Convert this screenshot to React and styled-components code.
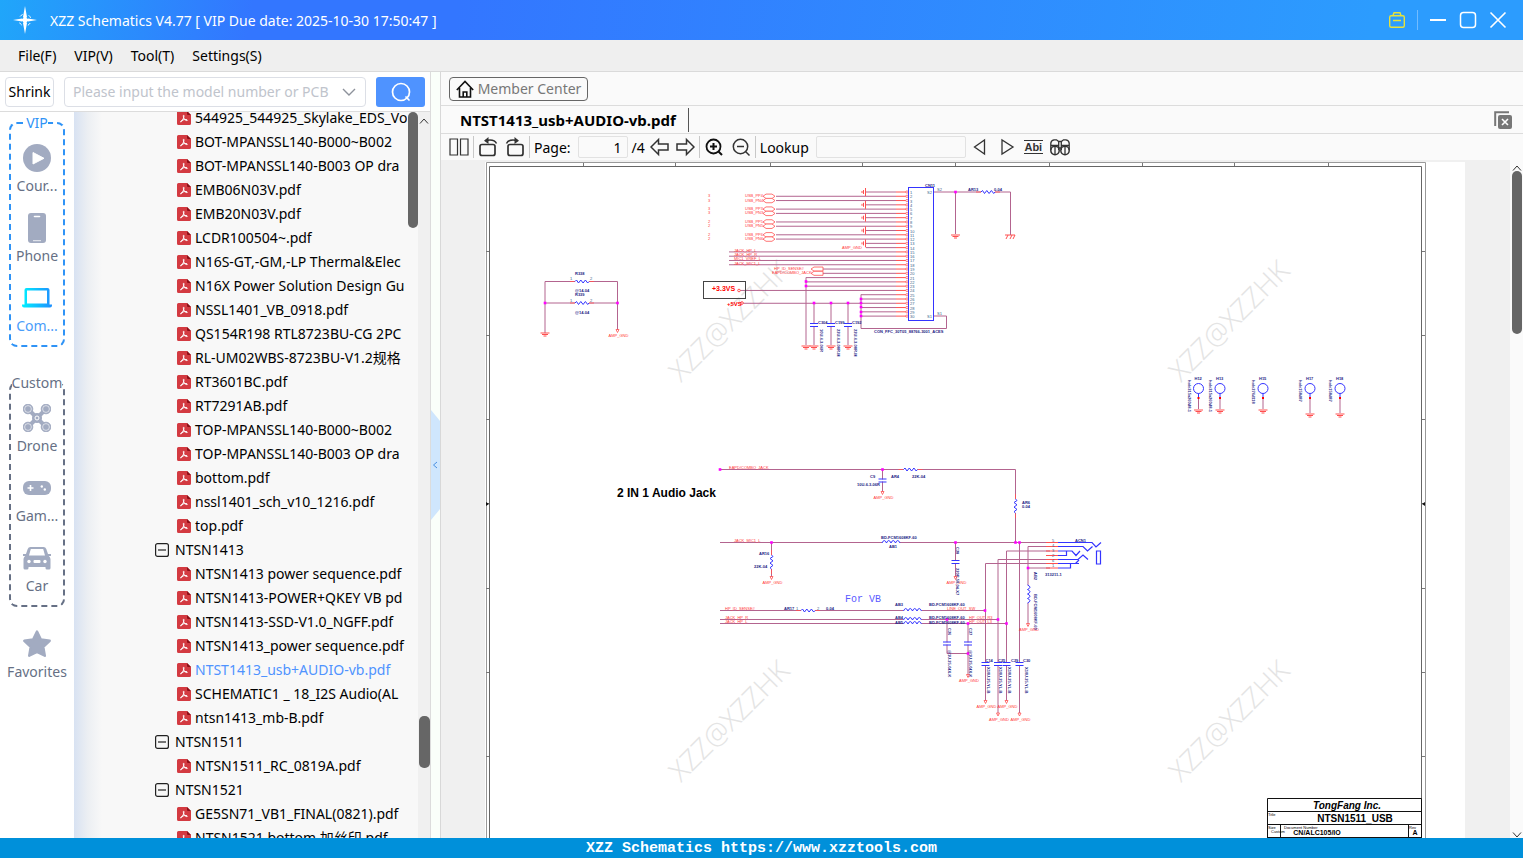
import React from 'react'
import styled, { createGlobalStyle, css } from 'styled-components'

const files = [
  { name: '544925_544925_Skylake_EDS_Vo' },
  { name: 'BOT-MPANSSL140-B000~B002' },
  { name: 'BOT-MPANSSL140-B003 OP dra' },
  { name: 'EMB06N03V.pdf' },
  { name: 'EMB20N03V.pdf' },
  { name: 'LCDR100504~.pdf' },
  { name: 'N16S-GT,-GM,-LP Thermal&Elec' },
  { name: 'N16X Power Solution Design Gu' },
  { name: 'NSSL1401_VB_0918.pdf' },
  { name: 'QS154R198 RTL8723BU-CG 2PC' },
  { name: 'RL-UM02WBS-8723BU-V1.2规格' },
  { name: 'RT3601BC.pdf' },
  { name: 'RT7291AB.pdf' },
  { name: 'TOP-MPANSSL140-B000~B002' },
  { name: 'TOP-MPANSSL140-B003 OP dra' },
  { name: 'bottom.pdf' },
  { name: 'nssl1401_sch_v10_1216.pdf' },
  { name: 'top.pdf' },
  { name: 'NTSN1413', folder: true },
  { name: 'NTSN1413 power sequence.pdf' },
  { name: 'NTSN1413-POWER+QKEY VB pd' },
  { name: 'NTSN1413-SSD-V1.0_NGFF.pdf' },
  { name: 'NTSN1413_power sequence.pdf' },
  { name: 'NTST1413_usb+AUDIO-vb.pdf', active: true },
  { name: 'SCHEMATIC1 _ 18_I2S Audio(AL' },
  { name: 'ntsn1413_mb-B.pdf' },
  { name: 'NTSN1511', folder: true },
  { name: 'NTSN1511_RC_0819A.pdf' },
  { name: 'NTSN1521', folder: true },
  { name: 'GE5SN71_VB1_FINAL(0821).pdf' },
  { name: 'NTSN1521 bottom 加丝印.pdf' },
]

/* ---------- icons ---------- */

const LogoIcon = () => (
  <svg width='24' height='30' viewBox='0 0 24 30' fill='#fff'>
    <path d='M12 1 14 12 12 15 10 12zM12 29 14 18 12 15 10 18zM0 15 9 13.600 12 15 9 16.400zM24 15 15 13.600 12 15 15 16.400z' />
    <circle cx='12' cy='15' r='6' fill='none' stroke='#fff' strokeDasharray='3 6.420' strokeDashoffset='-3.200' />
    <circle cx='12' cy='15' r='2.500' />
  </svg>
)

const BagIcon = () => (
  <svg width='18' height='18' viewBox='0 0 18 18' fill='none' stroke='#e6e23c' strokeWidth='1.4'>
    <rect x='1.700' y='4.700' width='14.600' height='11.600' rx='1.500' />
    <path d='M5 4.500 6 1.700h6l1 2.800M5 9.500h8' />
  </svg>
)

const PdfIcon = () => (
  <svg width='14' height='14' viewBox='0 0 14 14'>
    <path d='M1.500 0H10l4 4v8.500a1.500 1.500 0 0 1-1.500 1.500h-11A1.500 1.500 0 0 1 0 12.500v-11A1.500 1.500 0 0 1 1.500 0z' fill='#d33a41' />
    <path d='M10 0l4 4h-3a1 1 0 0 1-1-1z' fill='#8c1018' />
    <path d='M6.600 4.200c.8 0 .2 2.300-.5 3.800-.7 1.600-1.600 3-2.300 3-.9 0 .2-1.500 2.400-2.100 1.900-.5 4.200-.5 4.200.3 0 .9-2 .3-3-1.100C6.400 6.800 6 4.200 6.600 4.200z' fill='none' stroke='#fff' strokeWidth='1' />
  </svg>
)

const FolderIcon = () => (
  <svg width='14' height='14' viewBox='0 0 14 14' fill='none' stroke='#222' strokeWidth='1.200'>
    <rect x='.6' y='.6' width='12.800' height='12.800' rx='2' />
    <path d='M3 7h8' />
  </svg>
)

const CourseIcon = () => (
  <svg width='28' height='28' viewBox='0 0 28 28'>
    <circle cx='14' cy='14' r='14' fill='#a2abc1' />
    <path d='M10 8.500v11.500l11-5.700z' fill='#fff' stroke='#fff' strokeWidth='1' strokeLinejoin='round' />
  </svg>
)

const PhoneIcon = () => (
  <svg width='28' height='30' viewBox='0 0 28 30'>
    <rect x='5' y='0' width='18' height='30' rx='3' fill='#a2abc1' />
    <path d='M11.500 3.500h5' stroke='#fff' strokeWidth='1.600' strokeLinecap='round' />
    <path d='M10 27.700h8' stroke='#fff' strokeWidth='.8' />
  </svg>
)

const LaptopIcon = () => (
  <svg width='30' height='28' viewBox='0 0 30 28'>
    <defs>
      <linearGradient id='lap' x1='0' x2='1'>
        <stop offset='0' stopColor='#00f0ff' />
        <stop offset='1' stopColor='#1f8fff' />
      </linearGradient>
    </defs>
    <path fill='url(#lap)' fillRule='evenodd' d='M4.500 4h21a2 2 0 0 1 2 2v14.500h-25V6a2 2 0 0 1 2-2zM5 6.500v13h20v-13zM0 20.500h30v1a2 2 0 0 1-2 2H2a2 2 0 0 1-2-2z' />
  </svg>
)

const DroneIcon = () => (
  <svg width='28' height='28' viewBox='0 0 28 28' fill='none' stroke='#a2abc1'>
    <path d='M6 6l16 16M22 6 6 22' strokeWidth='4' />
    {[[5, 5], [23, 5], [5, 23], [23, 23]].map(([x, y]) => (
      <g key={`${x}${y}`}>
        <circle cx={x} cy={y} r='4.800' fill='#a2abc1' />
        <circle cx={x} cy={y} r='3.400' stroke='#fff' strokeWidth='.6' />
      </g>
    ))}
    <circle cx='14' cy='14' r='4.500' fill='#a2abc1' />
    <circle cx='14' cy='14' r='2' stroke='#fff' />
  </svg>
)

const GameIcon = () => (
  <svg width='28' height='28' viewBox='0 0 28 28'>
    <rect x='0' y='7' width='28' height='14' rx='6' fill='#a2abc1' />
    <path d='M4.500 14h6M7.500 11v6' stroke='#fff' strokeWidth='1.600' />
    <circle cx='18.800' cy='12.500' r='1.200' fill='#fff' />
    <circle cx='21.800' cy='15.500' r='1.200' fill='#fff' />
  </svg>
)

const CarIcon = () => (
  <svg width='28' height='28' viewBox='0 0 28 28'>
    <path fill='#a2abc1' fillRule='evenodd' d='M7.500 3h13a3 3 0 0 1 2.800 2l1.700 5H28v2h-2.200c1 .8 1.700 2 1.700 3.500V24a1.500 1.500 0 0 1-1.500 1.500h-2A1.500 1.500 0 0 1 22.500 24v-1h-17v1A1.500 1.500 0 0 1 4 25.500H2A1.500 1.500 0 0 1 .5 24v-8.500c0-1.500.7-2.700 1.700-3.500H0v-2h3l1.700-5a3 3 0 0 1 2.800-2zM7.800 5 6 11.500h16L20.200 5z' />
    <g fill='#fff'>
      <circle cx='6' cy='17.500' r='1.700' />
      <circle cx='22' cy='17.500' r='1.700' />
      <rect x='10.500' y='16' width='7' height='3' rx='1' />
    </g>
  </svg>
)

const StarIcon = () => (
  <svg width='28' height='28' viewBox='0 0 28 28'>
    <path d='M14 1.500l3.900 8 8.800 1.300-6.400 6.200 1.500 8.800L14 21.900l-7.800 3.900L7.700 17 1.300 10.800l8.800-1.300z' fill='#a2abc1' stroke='#a2abc1' strokeWidth='2.400' strokeLinejoin='round' />
  </svg>
)

const SearchIcon = () => (
  <svg width='22' height='22' viewBox='0 0 22 22' fill='none' stroke='#fff' strokeWidth='1.700' strokeLinecap='round'>
    <circle cx='11' cy='11' r='8.500' />
    <path d='M16 16l3 3' />
  </svg>
)

const HomeIcon = () => (
  <svg width='18' height='18' viewBox='0 0 18 18' fill='none' stroke='#111' strokeWidth='1.600'>
    <path d='M.8 10 9 1.500 17.200 10M3.500 8v9h11V8M7.200 17v-5h3.600v5' />
  </svg>
)

const ToolIcon = ({ children, width = 20 }) => (
  <svg width={width} height='20' viewBox={`0 0 ${width} 20`} fill='none' stroke='#333' strokeWidth='1.500'>
    {children}
  </svg>
)

/* ---------- schematic symbols ---------- */

const WIRE = '#b3648f'
const RED = '#ff5050'
const BLUE = '#3434ff'

const Wire = ({ d, color = WIRE }) => <path d={d} fill='none' stroke={color} strokeWidth='1' />
const Node = ({ x, y }) => <rect x={x - 1.300} y={y - 1.300} width='2.600' height='2.600' fill='#f0f' />
const Ground = ({ x, y }) => <path d={`M${x - 4.500} ${y}h9M${x - 3} ${y + 1.500}h6M${x - 1.500} ${y + 3}h3`} stroke={RED} strokeWidth='1' />
const Cap = ({ x, y }) => (
  <g>
    <rect x={x - 1} y={y - 1} width='2' height='2' fill='#fff' />
    <path d={`M${x - 4} ${y - 1.500}h8M${x - 4} ${y + 1.500}h8`} stroke={BLUE} />
  </g>
)
const Resistor = ({ x, y, vertical }) => (
  <g transform={`translate(${x} ${y}) rotate(${vertical ? 90 : 0})`}>
    <path d='M-7 0H7' stroke='#fff' strokeWidth='2' />
    <path d='M-12 0h5M7 0h5' stroke={RED} strokeWidth='.8' />
    <path d='M-7 0l1.500-1.500 2 3 2.300-3 2.300 3 2.300-3 2.300 3L7 0' fill='none' stroke={BLUE} />
  </g>
)
const Coil = ({ x, y, vertical }) => (
  <g transform={`translate(${x} ${y}) rotate(${vertical ? 90 : 0})`}>
    <path d='M-9 0H9' stroke='#fff' strokeWidth='2' />
    <path d='M-9 .5q2.200-5 4.500 0q2.200-5 4.500 0q2.200-5 4.500 0q2.200-5 4.500 0' fill='none' stroke={BLUE} />
  </g>
)
const AmpGnd = ({ x, y }) => (
  <g>
    <path d={`M${x - 1.500} ${y - 2.500}h3l-1.500 3z`} fill='#fff' stroke={RED} strokeWidth='.8' />
    <Net x={x - 9} y={y + 5}>AMP_GND</Net>
  </g>
)

const pinY = n => 192 + (n - 1) * 4.280
const pinStart = n => {
  if ([1, 4, 7, 10, 13, 14].includes(n)) return 866
  if (n < 13) return 776
  if (n < 19) return 729
  if (n < 21) return 823
  if (n < 24) return 806
  if (n === 24) return 739
  if (n === 27) return 743
  return 861
}
const pins = Array.from({ length: 30 }, (_, i) => i + 1)

const Connector = () => (
  <g>
    {pins.map(n => (
      <g key={n}>
        <Wire d={`M${pinStart(n)} ${pinY(n)}H896`} />
        <Wire d={`M896 ${pinY(n)}H906`} color={RED} />
        <circle cx='907' cy={pinY(n)} r='1.200' fill='#fff' stroke={RED} strokeWidth='.7' />
        <Pin x='910' y={pinY(n) + 2}>{n}</Pin>
      </g>
    ))}
    <rect x='908.500' y='187.500' width='25' height='133' fill='none' stroke={BLUE} />
    {[1, 4, 7, 10, 13].map(n => (
      <path key={n} d={`M865.500 ${pinY(n) - 4}v8M863.500 ${pinY(n) - 2}v4M862 ${pinY(n) - 1}v2`} stroke={RED} />
    ))}
    {[2, 3, 5, 6, 8, 9, 11, 12].map((n, i) => (
      <g key={n}>
        <path d={`M763 ${pinY(n)}l3-2.200h6l3 2.200-3 2.200h-6z`} fill='#fff' stroke={RED} strokeWidth='.8' />
        <Net x='745' y={pinY(n) + 1}>{['USB_PP4', 'USB_PN4', 'USB_PP3', 'USB_PN3', 'USB_PP5', 'USB_PN5', 'USB_PP6', 'USB_PN6'][i]}</Net>
        <Net x='708' y={pinY(n) + 1}>{i < 4 ? 3 : 2}</Net>
      </g>
    ))}
    {['JACK_HP_L', 'JACK_HP_R', 'MIC1_VREF_L', 'JACK_MIC1_L'].map((t, i) => (
      <Net key={t} x='734' y={pinY(15 + i)}>{t}</Net>
    ))}
    <Net x='842' y={pinY(14) + 1}>AMP_GND</Net>
    {[19, 20].map(n => (
      <path key={n} d={`M823 ${pinY(n) - 2}h-9l-3 2 3 2h9z`} fill='#fff' stroke={RED} strokeWidth='.8' />
    ))}
    <Net x='774' y={pinY(19) + 1}>HP_ID_SENSE#</Net>
    <Net x='772' y={pinY(20) + 1}>EAPD/COMBO_JACK</Net>
    <Wire d='M806 277.500V345M861 294.500V328.500H946.500V316H934M934 192H1010.500V235M955.500 192V234' />
    <Ground x={806} y={346} />
    <Ground x={955.500} y={235} />
    <path d='M1005 235h10M1006 239l2-4M1010 239l2-4M1013 239l2-4' stroke={RED} />
    <Resistor x={988} y={192} />
    {[[806, 281.500], [806, 286], [861, 299], [861, 303], [861, 307], [861, 312], [861, 316], [955.500, 192]].map(([x, y]) => (
      <Node key={`${x}-${y}`} x={x} y={y} />
    ))}
    {[[814, 'C304', '10U-6.3-06R'], [831, 'C199', '22U-6.3-08R-M'], [848, 'C192', '22U-6.3-08R-M']].map(([x, a, b]) => (
      <g key={x}>
        <Wire d={`M${x} 303V345`} />
        <Node x={x} y={303} />
        <Cap x={x} y={325} />
        <Ground x={x} y={346} />
        <Part x={x + 4} y='324'>{a}</Part>
        <Part transform={`translate(${x + 6} 329) rotate(90)`}>{b}</Part>
      </g>
    ))}
    <Part x='925' y='187'>CN11</Part>
    <Pin x='927' y='194'>S2</Pin>
    <Pin x='927' y='318'>S1</Pin>
    <Pin x='937' y='191'>S2</Pin>
    <Pin x='937' y='315'>S1</Pin>
    <Part x='968' y='191'>AR13</Part>
    <Part x='994' y='191'>0-04</Part>
    <Part x='874' y='333'>CON_FFC_30T05_88766-3001_ACES</Part>
    <rect x='703.500' y='281.500' width='42' height='17' fill='none' stroke='#444' />
    <circle cx='739' cy='290.500' r='1.300' fill='#fff' stroke={RED} />
    <circle cx='742' cy='303' r='1.300' fill='#fff' stroke={RED} />
    <Power x='712' y='291' $size={7}>+3.3VS</Power>
    <Power x='727' y='306' $size={6}>+5VS</Power>
  </g>
)

const holes = [
  [1198.500, 'H12', 'hole315x260d8-1', 409],
  [1220, 'H13', 'hole315x260d8-1', 409],
  [1263, 'H15', 'hole276d118', 409],
  [1310, 'H17', 'hole158d87', 413],
  [1340, 'H18', 'hole158d87', 413],
]

const Audio = () => (
  <g>
    <Wire d='M720 469.500H1015.500V542.500M882.500 469.500V493M720 542.500H1050M771.500 542.500V578M955.500 542.500V579M720 610.500H985.500M720 619.500H998M720 623.500H1006.500' />
    <Wire d='M1050 546.500H1028V626M1050 551H1006.500V702M1050 559.500H998V715M1050 563.500H985.500V702M1019.500 542.500V715M1028 568H1050M947 619.500V653.500H968M968 623.500V677' />
    <path d='M1046 542.500h12M1046 546.500h12M1046 551h12M1046 555.500h12M1046 559.500h12M1046 563.500h12M1046 568h12' stroke={RED} />
    <path d='M1058 542.500h34l4 4.500 5-4.500M1058 546.500h25l4.500 4.500 5-4.500M1058 551h14l4 4.500 4-4.500M1058 555.500h8.500V551M1058 559.500h20l5-4.500 5 4.500M1079 560l-3.500 3.500M1058 563.500h21M1058 568h12.500v-4.500M1096.500 551h4v13h-4z' fill='none' stroke={BLUE} strokeWidth='1.200' />
    {[[720, 469.500], [882.500, 469.500], [771.500, 542.500], [955.500, 542.500], [1015.500, 542.500], [1019.500, 542.500], [1028, 568], [985, 610.500], [998, 619.500], [1006.500, 623.500], [947, 619.500], [968, 623.500], [968, 653.500]].map(([x, y]) => (
      <Node key={`${x}-${y}`} x={x} y={y} />
    ))}
    <Resistor x={910.500} y={469.500} />
    <Resistor x={1015.500} y={506} vertical />
    <Resistor x={771.500} y={562} vertical />
    <Resistor x={808} y={610.500} />
    <Coil x={891} y={542.500} />
    <Coil x={912.500} y={610.500} />
    <Coil x={912.500} y={619.500} />
    <Coil x={912.500} y={623.500} />
    <Coil x={1028} y={594} vertical />
    {[[882.500, 480.500], [955.500, 562], [947, 643.500], [968, 643.500], [985.500, 664], [998, 664], [1006.500, 664], [1019.500, 664]].map(([x, y]) => (
      <Cap key={`${x}-${y}`} x={x} y={y} />
    ))}
    {[[882.500, 494], [771.500, 579], [955.500, 579], [1028, 626], [968, 677], [985.500, 703], [1006.500, 703], [998, 715.500], [1019.500, 715.500]].map(([x, y]) => (
      <AmpGnd key={`${x}-${y}`} x={x} y={y} />
    ))}
    <Net x='729' y='469'>EAPD/COMBO_JACK</Net>
    <Net x='734' y='542'>JACK_MIC1_L</Net>
    <Net x='725' y='610'>HP_ID_SENSE#</Net>
    <Net x='725' y='619'>JACK_HP_R</Net>
    <Net x='725' y='623'>JACK_HP_L</Net>
    <Net x='947' y='610'>LINE_OUT_SW</Net>
    <Net x='969' y='619'>HP_OUT_R3</Net>
    <Net x='969' y='623'>HP_OUT_L3</Net>
    <Part x='870' y='478'>C9</Part>
    <Part x='857' y='486'>10U-6.3-06R</Part>
    <Part x='891' y='478'>AR4</Part>
    <Part x='912' y='478'>22K-04</Part>
    <Part x='1022' y='504'>AR6</Part>
    <Part x='1022' y='508'>0-04</Part>
    <Part x='881' y='539'>BD-FCM1608KF-60</Part>
    <Part x='889' y='548'>AB1</Part>
    <Part x='759' y='555'>AR16</Part>
    <Part x='754' y='568'>22K-04</Part>
    <Part x='784' y='610'>AR17</Part>
    <Pin x='796' y='610'>1</Pin>
    <Pin x='817' y='610'>2</Pin>
    <Part x='826' y='610'>0-04</Part>
    <Part x='895' y='606'>AB3</Part>
    <Part x='895' y='619'>AB4</Part>
    <Part x='895' y='624'>AB5</Part>
    <Part x='929' y='606'>BD-FCM1608KF-60</Part>
    <Part x='929' y='619'>BD-FCM1608KF-60</Part>
    <Part x='929' y='624'>BD-FCM1608KF-60</Part>
    <Part x='1075' y='542'>ACN1</Part>
    <Part x='1045' y='576'>313211-1</Part>
    {['5', '4', '3', '2', '6', '1'].map((t, i) => <Pin key={t} x='1052' y={542 + i * 5}>{t}</Pin>)}
    <Part transform='translate(956 547) rotate(90)'>C28</Part>
    <Part transform='translate(956 568) rotate(90)'>220P-50-04-X7</Part>
    <Part transform='translate(1034 572) rotate(90)'>AB2</Part>
    <Part transform='translate(1034 594) rotate(90)'>BD-FCM1608KF-60</Part>
    <Part transform='translate(948 628) rotate(90)'>C26</Part>
    <Part transform='translate(969 628) rotate(90)'>C27</Part>
    <Part transform='translate(948 650) rotate(90)'>@1U-25-04X-K</Part>
    <Part transform='translate(969 650) rotate(90)'>@1U-25-04X-K</Part>
    {[['C14', 985.500], ['C25', 998], ['C29', 1011], ['C30', 1023]].map(([t, x]) => (
      <Part key={t} x={x} y='662'>{t}</Part>
    ))}
    {[987, 999, 1008, 1025].map(x => (
      <Part key={x} transform={`translate(${x} 667) rotate(90)`}>X10U-25-YL-B</Part>
    ))}
    <Heading x='617' y='497'>2 IN 1 Audio Jack</Heading>
    <Note x='845' y='602'>For VB</Note>
  </g>
)

const Schematic = () => (
  <Drawing viewBox='485 162 980 676' preserveAspectRatio='xMidYMin slice' role='img' aria-label='NTSN1511_USB schematic'>
    {[[681, 383], [1181, 383], [681, 783], [1181, 783]].map(([x, y]) => (
      <Watermark key={`${x}-${y}`} transform={`translate(${x} ${y}) rotate(-45)`}>XZZ@XZZHK</Watermark>
    ))}
    <path d='M486.500 842V162.500H1425.500V842' fill='none' stroke='#999' />
    <path d='M489.500 842V166.500H1421.500V842' fill='none' stroke='#666' />
    {[583, 675, 770, 862, 955, 1049, 1142, 1234, 1328].map(x => <path key={x} d={`M${x + 0.500} 163v3`} stroke='#777' />)}
    {[252, 336, 420, 504, 589, 673, 757].map(y => <path key={y} d={`M486 ${y - 0.500}h3M1422 ${y - 0.500}h3`} stroke='#777' />)}
    <path d='M486 502v4l3-2zM1425 502v4l-3-2z' fill='#111' />

    <Wire d='M545 333V281.500H617.500V330M545 303H617.500' />
    <Resistor x={582} y={281.500} />
    <Resistor x={582} y={303} />
    <Node x={545} y={303} />
    <Node x={617.500} y={303} />
    <Ground x={545} y={333} />
    <AmpGnd x={617.500} y={332} />
    <Part x='575' y='275'>R338</Part>
    <Part x='575' y='292'>@14-04</Part>
    <Part x='575' y='296'>R339</Part>
    <Part x='575' y='314'>@14-04</Part>
    {[280, 302].map(y => (
      <g key={y}>
        <Pin x='570' y={y}>1</Pin>
        <Pin x='590' y={y}>2</Pin>
      </g>
    ))}

    <Connector />
    <Audio />

    {holes.map(([x, name, type, end]) => (
      <g key={name}>
        <circle cx={x} cy='388.500' r='5' fill='none' stroke={BLUE} />
        <Wire d={`M${x} 393.500V398`} color={BLUE} />
        <Wire d={`M${x} 399V${end}`} />
        <rect x={x - 1} y='397' width='2' height='2' fill='#f00' />
        <Ground x={x} y={end + 1} />
        <Part x={x - 4} y='380'>{name}</Part>
        <Part transform={`translate(${x - 11} 380) rotate(90)`}>{type}</Part>
      </g>
    ))}

    <path d='M1267.500 842V798.500H1421.500V842M1267 811.500h154M1267 824.500h154M1267 837.500h154M1280.500 824V838M1408.500 824V838' fill='none' stroke='#111' />
    <Title x='1347' y='809' $italic>TongFang Inc.</Title>
    <Title x='1355' y='822'>NTSN1511_USB</Title>
    <Small x='1268' y='816'>Title</Small>
    <Small x='1268' y='829'>Size</Small>
    <Small x='1271' y='833'>Custom</Small>
    <Small x='1284' y='829'>Document Number</Small>
    <Small x='1409' y='829'>Rev</Small>
    <Title x='1317' y='835' $size={7}>CN/ALC105/IO</Title>
    <Title x='1415' y='835' $size={7}>A</Title>
  </Drawing>
)

/* ---------- app ---------- */

const SideItem = ({ icon, label, active }) => (
  <SideButton type='button' $active={active}>
    <IconBox>{icon}</IconBox>
    {label}
  </SideButton>
)

const App = () => {
  return (
    <Window>
      <GlobalStyle />
      <TitleBar>
        <LogoIcon />
        <AppTitle>XZZ Schematics V4.77 [ VIP Due date: 2025-10-30 17:50:47 ]</AppTitle>
        <WindowControls>
          <TitleButton type='button' aria-label='VIP'><BagIcon /></TitleButton>
          <TitleDivider />
          <TitleButton type='button' aria-label='Minimize'>
            <svg width='18' height='18' viewBox='0 0 18 18' stroke='#fff' strokeWidth='2'><path d='M1 9h16' /></svg>
          </TitleButton>
          <TitleButton type='button' aria-label='Maximize'>
            <svg width='18' height='18' viewBox='0 0 18 18' fill='none' stroke='#fff' strokeWidth='1.500'><rect x='1.500' y='1.500' width='15' height='15' rx='3' /></svg>
          </TitleButton>
          <TitleButton type='button' aria-label='Close'>
            <svg width='18' height='18' viewBox='0 0 18 18' stroke='#fff' strokeWidth='1.600'><path d='M1.500 1.500l15 15M16.500 1.500l-15 15' /></svg>
          </TitleButton>
        </WindowControls>
      </TitleBar>

      <MenuBar>
        {['File(F)', 'VIP(V)', 'Tool(T)', 'Settings(S)'].map(m => (
          <MenuButton type='button' key={m}>{m}</MenuButton>
        ))}
      </MenuBar>

      <Body>
        <LeftPanel>
          <SearchBar>
            <ShrinkButton type='button'>Shrink</ShrinkButton>
            <Combo>
              <input aria-label='Model number' placeholder='Please input the model number or PCB' />
              <svg width='14' height='8' viewBox='0 0 14 8' fill='none' stroke='#8d929b' strokeWidth='1.400'><path d='M1 1l6 6 6-6' /></svg>
            </Combo>
            <SearchButton type='button' aria-label='Search'><SearchIcon /></SearchButton>
          </SearchBar>
          <LeftContent>
            <Sidebar>
              <SideGroup $color='#2f93f6'>
                <legend>VIP</legend>
                <SideItem icon={<CourseIcon />} label='Cour...' />
                <SideItem icon={<PhoneIcon />} label='Phone' />
                <SideItem icon={<LaptopIcon />} label='Com...' active />
              </SideGroup>
              <SideGroup $color='#667085'>
                <legend>Custom</legend>
                <SideItem icon={<DroneIcon />} label='Drone' />
                <SideItem icon={<GameIcon />} label='Gam...' />
                <SideItem icon={<CarIcon />} label='Car' />
              </SideGroup>
              <SideItem icon={<StarIcon />} label='Favorites' />
            </Sidebar>
            <Tree>
              <TreeList>
                {files.map(f => (
                  <li key={f.name}>
                    <TreeRow type='button' $folder={f.folder} $active={f.active}>
                      {f.folder ? <FolderIcon /> : <PdfIcon />}
                      <span>{f.name}</span>
                    </TreeRow>
                  </li>
                ))}
              </TreeList>
            </Tree>
            <InnerScroll><Thumb $height={116} $width={10} /></InnerScroll>
            <OuterScroll>
              <svg width='10' height='6' viewBox='0 0 10 6' fill='none' stroke='#333'><path d='M1 5.500l4-4.500 4 4.500' /></svg>
              <Thumb $height={52} $width={11} $top={592} />
            </OuterScroll>
          </LeftContent>
        </LeftPanel>

        <Splitter>
          <button type='button' aria-label='Collapse'>
            <svg width='9' height='110' viewBox='0 0 9 110'>
              <path d='M0 0l9 11v88l-9 11z' fill='#cfe6fd' />
              <path d='M6 52l-3.500 3L6 58' fill='none' stroke='#4a90e2' />
            </svg>
          </button>
        </Splitter>

        <RightPanel>
          <MemberRow>
            <MemberButton type='button'><HomeIcon />Member Center</MemberButton>
          </MemberRow>
          <TabRow>
            <Tab type='button'>NTST1413_usb+AUDIO-vb.pdf</Tab>
            <IconButton type='button' aria-label='Close all'>
              <svg width='18' height='18' viewBox='0 0 18 18'>
                <path d='M1.200 15V1.200H15' fill='none' stroke='#777' strokeWidth='2' />
                <rect x='4' y='4' width='14' height='14' rx='2' fill='#777' />
                <path d='M8 8l6 6M14 8l-6 6' stroke='#fff' strokeWidth='1.600' />
              </svg>
            </IconButton>
          </TabRow>
          <Toolbar>
            <IconButton type='button' aria-label='Two pages'>
              <ToolIcon><path d='M1 2h7.500v16H1zM11.500 2H19v16h-7.500z' strokeWidth='1.200' /></ToolIcon>
            </IconButton>
            <Divider />
            <ToolGroup $gap={7}>
              <IconButton type='button' aria-label='Rotate left'>
                <ToolIcon><rect x='2' y='7.500' width='15' height='11' rx='2' strokeWidth='1.700' /><path d='M18.500 6.500C17 3 12 2.500 7.500 3.500' /><path d='M10.500 0v7L6 3.800z' fill='#333' stroke='none' /></ToolIcon>
              </IconButton>
              <IconButton type='button' aria-label='Rotate right'>
                <ToolIcon><rect x='3' y='7.500' width='15' height='11' rx='2' strokeWidth='1.700' /><path d='M1.500 6.500C3 3 8 2.500 12.500 3.500' /><path d='M9.500 0v7L14 3.800z' fill='#333' stroke='none' /></ToolIcon>
              </IconButton>
            </ToolGroup>
            <Divider />
            <ToolGroup $gap={7}>
              <label htmlFor='page'>Page:</label>
              <ToolInput id='page' defaultValue='1' $width={50} $right />
            </ToolGroup>
            <ToolGroup $gap={5}>
              <span>/4</span>
              <IconButton type='button' aria-label='Previous page'>
                <ToolIcon><path d='M1 10l7.500-7.500V7H18v6H8.500v4.500z' /></ToolIcon>
              </IconButton>
              <IconButton type='button' aria-label='Next page'>
                <ToolIcon><path d='M19 10l-7.500-7.500V7H2v6h9.500v4.500z' /></ToolIcon>
              </IconButton>
            </ToolGroup>
            <Divider />
            <ToolGroup $gap={7}>
              <IconButton type='button' aria-label='Zoom in'>
                <ToolIcon><circle cx='9.500' cy='9.500' r='7' stroke='#111' strokeWidth='1.800' /><path d='M14.500 14.500 18 18M6 9.500h7M9.500 6v7' stroke='#111' strokeWidth='2' /></ToolIcon>
              </IconButton>
              <IconButton type='button' aria-label='Zoom out'>
                <ToolIcon><circle cx='9.500' cy='9.500' r='7.200' /><path d='M14.500 14.500l4 4M6 9.500h7' /></ToolIcon>
              </IconButton>
            </ToolGroup>
            <Divider />
            <ToolGroup $gap={7}>
              <label htmlFor='lookup'>Lookup</label>
              <ToolInput id='lookup' $width={150} />
            </ToolGroup>
            <ToolGroup $gap={7}>
              <IconButton type='button' aria-label='Find previous'>
                <ToolIcon><path d='M14.500 3v14l-10-7z' strokeWidth='1.300' /></ToolIcon>
              </IconButton>
              <IconButton type='button' aria-label='Find next'>
                <ToolIcon><path d='M5 3v14l11-7z' strokeWidth='1.300' /></ToolIcon>
              </IconButton>
              <WordButton type='button'>Abi</WordButton>
              <IconButton type='button' aria-label='Find'>
                <ToolIcon>
                  <circle cx='5' cy='13.500' r='4.200' />
                  <circle cx='15' cy='13.500' r='4.200' />
                  <path d='M.8 13V7a4 4 0 0 1 3.200-4.200h2.500L8.700 4.500h2.600l2.200-1.700H16A4 4 0 0 1 19.200 7v6M8.700 4.500V13M11.300 4.500V13M1 8.500h7.700M11.300 8.500H19M8.700 11h2.600M5 9.500v8M15 9.500v8' strokeWidth='1.300' />
                </ToolIcon>
              </IconButton>
            </ToolGroup>
          </Toolbar>
          <Viewer>
            <Sheet><Schematic /></Sheet>
            <ViewerScroll>
              <svg width='10' height='6' viewBox='0 0 10 6' fill='none' stroke='#333'><path d='M1 5.500l4-4.500 4 4.500' /></svg>
              <Thumb $height={163} $width={10} />
              <svg width='10' height='6' viewBox='0 0 10 6' fill='none' stroke='#333'><path d='M1 .5l4 4.500 4-4.500' /></svg>
            </ViewerScroll>
          </Viewer>
        </RightPanel>
      </Body>

      <Footer>XZZ Schematics https://www.xzztools.com</Footer>
    </Window>
  )
}

const GlobalStyle = createGlobalStyle`
  * {
    box-sizing: border-box;
  }

  body {
    margin: 0;
    font-family: 'Noto Sans', 'Noto Sans CJK SC', sans-serif;
    font-size: 14px;
    color: #000;
  }

  button, input {
    font: inherit;
    color: inherit;
  }

  button {
    padding: 0;
    border: none;
    background: none;
  }

  svg {
    flex-shrink: 0;
  }
`

const Window = styled.div`
  display: flex;
  flex-direction: column;
  height: 100vh;
  overflow: hidden;
`

const TitleBar = styled.header`
  display: flex;
  align-items: center;
  height: 40px;
  flex-shrink: 0;
  padding: 0 16px 0 13px;
  background: linear-gradient(100deg, #20a6fa 0, #3376ff 250px, #3376ff 30%, #2c9cfe 90%);
`

const AppTitle = styled.h1`
  margin: 0 0 0 13px;
  font-size: 14px;
  font-weight: 400;
  color: #fff;
`

const WindowControls = styled.div`
  display: flex;
  align-items: center;
  gap: 12px;
  margin-left: auto;
`

const TitleButton = styled.button`
  display: flex;
`

const TitleDivider = styled.span`
  width: 1px;
  height: 20px;
  margin: 0 -1px;
  background: #72bcff;
`

const MenuBar = styled.nav`
  display: flex;
  align-items: center;
  gap: 18px;
  height: 32px;
  flex-shrink: 0;
  padding: 1px 18px 0;
  background: #efefef;
  border-bottom: 1px solid #dadada;
`

const MenuButton = styled.button`
  line-height: 20px;
`

const Body = styled.div`
  display: flex;
  flex: 1;
  min-height: 0;
`

const LeftPanel = styled.div`
  display: flex;
  flex-direction: column;
  width: 431px;
  flex-shrink: 0;
  border-right: 1px solid #dcdcdc;
`

const SearchBar = styled.div`
  display: flex;
  align-items: center;
  gap: 10px;
  height: 40px;
  flex-shrink: 0;
  padding: 0 5px;
  background: #fff;
  border-bottom: 1px solid #dcdcdc;
`

const ShrinkButton = styled.button`
  width: 49px;
  height: 30px;
  border: 1px solid #dcdfe6;
  border-radius: 4px;
`

const Combo = styled.div`
  display: flex;
  align-items: center;
  flex: 1;
  min-width: 0;
  height: 30px;
  gap: 7px;
  padding: 0 9px 0 8px;
  border: 1px solid #dcdfe6;
  border-radius: 4px;

  input {
    flex: 1;
    min-width: 0;
    padding: 0;
    border: none;
    outline: none;
    background: none;
  }

  input::placeholder {
    color: #c0c4cc;
  }
`

const SearchButton = styled.button`
  display: flex;
  align-items: center;
  justify-content: center;
  width: 49px;
  height: 30px;
  border-radius: 3px;
  background: #4f93ff;
`

const LeftContent = styled.div`
  display: flex;
  flex: 1;
  min-height: 0;
`

const Sidebar = styled.aside`
  display: flex;
  flex-direction: column;
  align-items: center;
  width: 74px;
  flex-shrink: 0;
  padding-top: 1px;
  background: #fff;
`

const SideGroup = styled.fieldset`
  width: 56px;
  min-width: 0;
  margin: 0 0 26px;
  padding: 0 0 2px;
  border: 2px dashed ${props => props.$color};
  border-radius: 8px;
  display: flex;
  flex-direction: column;
  align-items: center;

  &:last-of-type {
    margin-bottom: 12px;
  }

  legend {
    margin: 0 auto;
    padding: 0;
    line-height: 20px;
    color: ${props => props.$color};
  }
`

const SideButton = styled.button`
  display: flex;
  flex-direction: column;
  align-items: center;
  gap: 4px;
  height: 70px;
  padding-top: 11px;
  line-height: 20px;
  color: ${props => (props.$active ? '#4a9dfa' : '#667085')};
`

const IconBox = styled.span`
  display: flex;
  align-items: center;
  justify-content: center;
  height: 28px;
`

const Tree = styled.div`
  flex: 1;
  min-width: 0;
  overflow: hidden;
  background: linear-gradient(90deg, #d8e2f2 0, #eceff3 14px, #f8f8f8 28px);
`

const TreeList = styled.ul`
  margin: -6px 0 0;
  padding: 0;
  list-style: none;
`

const TreeRow = styled.button`
  display: flex;
  align-items: center;
  width: 100%;
  height: 24px;
  padding-left: ${props => (props.$folder ? 81 : 103)}px;
  gap: ${props => (props.$folder ? 6 : 4)}px;
  white-space: nowrap;
  color: ${props => (props.$active ? '#4f93ff' : '#000')};

  span {
    line-height: 24px;
  }
`

const scroll = css`
  display: flex;
  flex-direction: column;
  align-items: center;
  flex-shrink: 0;
`

const InnerScroll = styled.div`
  ${scroll}
  width: 11px;
  background: #f8f8f8;
`

const OuterScroll = styled.div`
  ${scroll}
  width: 12px;
  padding-top: 6px;
  background: #f0f0f0;
`

const ViewerScroll = styled.div`
  ${scroll}
  width: 13px;
  padding-top: 5px;
  background: #fafafa;

  svg:last-child {
    margin-top: auto;
  }
`

const Thumb = styled.div`
  width: ${props => props.$width}px;
  height: ${props => props.$height}px;
  margin-top: ${props => props.$top || 0}px;
  flex-shrink: 0;
  border-radius: 5px;
  background: #666;
`

const Splitter = styled.div`
  display: flex;
  align-items: center;
  width: 10px;
  padding-top: 20px;
  flex-shrink: 0;
  background: #fafffa;
  border-right: 1px solid #d8d8d8;

  button {
    display: flex;
  }
`

const RightPanel = styled.main`
  display: flex;
  flex-direction: column;
  flex: 1;
  min-width: 0;
  background: #fafafa;
`

const MemberRow = styled.div`
  display: flex;
  align-items: center;
  height: 34px;
  flex-shrink: 0;
  padding: 0 8px;
  border-bottom: 1px solid #dcdcdc;
`

const MemberButton = styled.button`
  display: flex;
  align-items: center;
  justify-content: center;
  gap: 4px;
  width: 139px;
  height: 24px;
  border: 1px solid #666;
  border-radius: 4px;
  color: #777;
`

const TabRow = styled.div`
  display: flex;
  align-items: center;
  justify-content: space-between;
  height: 28px;
  flex-shrink: 0;
  padding-right: 11px;
  border-bottom: 1px solid #dcdcdc;
`

const Tab = styled.button`
  height: 24px;
  padding: 0 12px 0 19px;
  border-right: 1px solid #555;
  font-size: 15px;
  font-weight: 700;
`

const Toolbar = styled.div`
  display: flex;
  align-items: center;
  gap: 4px;
  height: 26px;
  flex-shrink: 0;
  padding-left: 8px;
`

const ToolGroup = styled.div`
  display: flex;
  align-items: center;
  gap: ${props => props.$gap}px;
`

const Divider = styled.span`
  width: 1px;
  height: 22px;
  background: #c8c8c8;
`

const IconButton = styled.button`
  display: flex;
`

const WordButton = styled.button`
  width: 19px;
  border-top: 1px solid #333;
  border-bottom: 1px solid #333;
  font: 700 11px/12px 'Liberation Sans', sans-serif;
  color: #333;
`

const ToolInput = styled.input`
  width: ${props => props.$width}px;
  height: 22px;
  padding: 0 5px;
  border: 1px solid #e2e2e2;
  border-radius: 2px;
  background: #fafafa;
  text-align: ${props => (props.$right ? 'right' : 'left')};
`

const Viewer = styled.div`
  display: flex;
  flex: 1;
  min-height: 0;
  background: #f0f0f0;
`

const Sheet = styled.div`
  flex: 1;
  min-width: 0;
  margin: 2px 45px 0 44px;
  background: #fff;
`

const Drawing = styled.svg`
  display: block;
  width: 100%;
  height: 100%;
`

const Net = styled.text`
  font: 4px 'Liberation Sans', sans-serif;
  fill: #ff3838;
`

const Part = styled.text`
  font: 700 4px 'Liberation Sans', sans-serif;
  fill: #1c1c84;
`

const Pin = styled.text`
  font: 4px 'Liberation Sans', sans-serif;
  fill: #35608a;
`

const Power = styled.text`
  font: 700 ${props => props.$size}px 'Liberation Sans', sans-serif;
  fill: #f00;
`

const Heading = styled.text`
  font: 700 12px 'Liberation Sans', sans-serif;
`

const Note = styled.text`
  font: 10px 'Liberation Mono', monospace;
  fill: #5a5aff;
`

const Title = styled.text`
  font: ${props => (props.$italic ? 'italic' : 'normal')} 700 ${props => props.$size || 10}px 'Liberation Sans', sans-serif;
  text-anchor: middle;
`

const Small = styled.text`
  font: 4px 'Liberation Sans', sans-serif;
`

const Watermark = styled.text`
  font: 300 28px 'Open Sans', 'Noto Sans', sans-serif;
  fill: #e4e4e4;
`

const Footer = styled.footer`
  height: 20px;
  flex-shrink: 0;
  background: #0090da;
  font: 700 15px/22px 'Liberation Mono', monospace;
  text-align: center;
  color: #fff;
`

export default App
